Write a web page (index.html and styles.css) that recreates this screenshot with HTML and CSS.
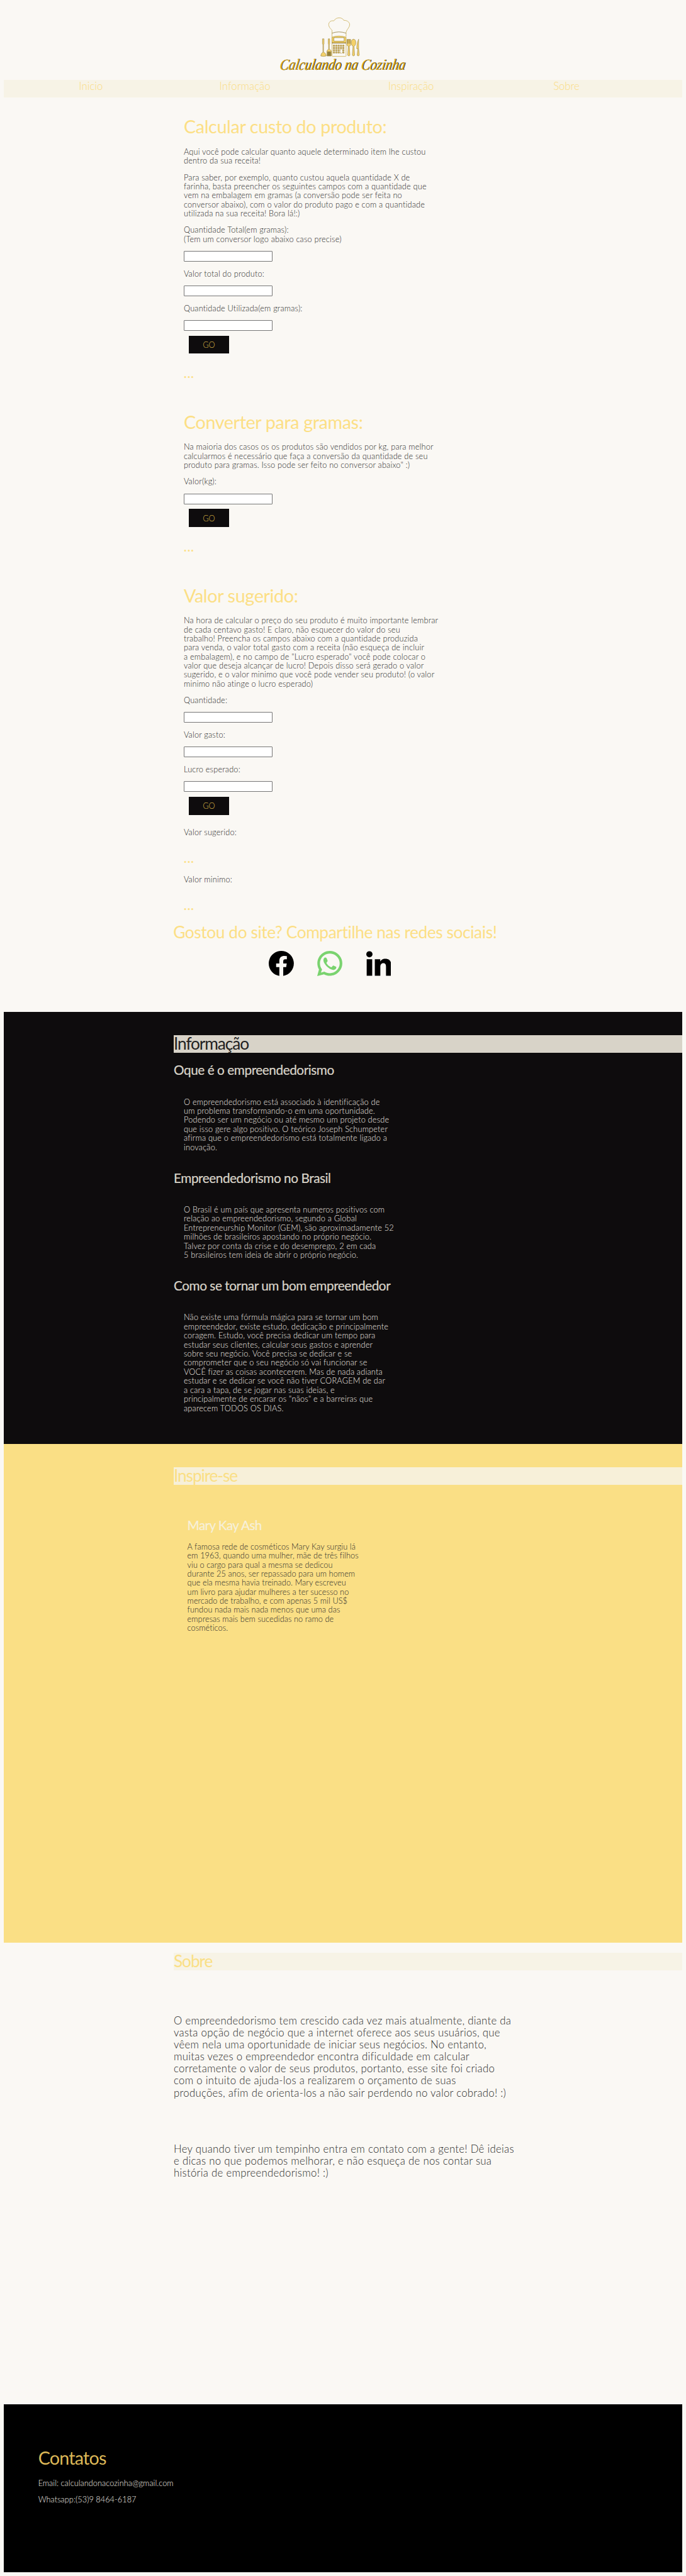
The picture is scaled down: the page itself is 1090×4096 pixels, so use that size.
FILE: index.html
```html
<!DOCTYPE html>
<html lang="pt-BR">
<head>
<meta charset="utf-8">
<title>Calculando na Cozinha</title>
<link rel="stylesheet" href="styles.css">
</head>
<body>
<header class="header">
  <svg class="logo" viewBox="0 0 260 120" role="img" aria-label="Calculando na Cozinha">
    <g fill="none" stroke="#c9ad55" stroke-width="1">
      <path d="M108.5 38V30C104 26 101.500 22 102 18C102.500 13 107 10.500 112 11.500C115 7 119 5.300 123 5.500C127 5.300 131 8 132 10.500C138 10 143.500 14 143.700 19C143.500 25 138 28 136.500 34V43"/>
      <path d="M108.500 36Q122 31 136.500 36" stroke="#8f7b3c"/>
      <path d="M108.500 37V81Q108.500 82.300 110 82.300H135Q136.500 82.300 136.500 81V56"/>
    </g>
    <path d="M108.500 44Q122 39.500 136.500 44V55.700H108.500z" fill="#f6d467" stroke="#a88d42" stroke-width=".8"/>
    <rect x="112.300" y="45" width="20.400" height="6.800" fill="#fbf9f4" stroke="#7c6930" stroke-width=".7"/>
    <path d="M108.500 55.500H136.500" stroke="#7c6930" stroke-width="1.200"/>
    <g stroke="#a98c3c" stroke-width="3.600" stroke-dasharray="3.600 1.100">
      <path d="M110.500 61H133.200M110.500 65.500H133.200M110.500 70H133.200M110.500 74.500H133.200"/>
    </g>
    <g stroke="#f6dc8c" stroke-width="1.300" stroke-dasharray="1.300 3.400">
      <path d="M111.700 61H133M111.700 65.500H133M111.700 70H133M111.700 74.500H133"/>
    </g>
    <rect x="125.500" y="68.500" width="2.800" height="7" fill="#fff"/>
    <g fill="#f4d16a" stroke="#8a7538" stroke-width=".7">
      <path d="M89.500 47.300h3v10l-.9 1.500V74C95 75 96.700 78 96.700 81.500Q91 83 86.200 81.500C86.200 78 88 75 90.400 74V58.800l-.9-1.500z"/>
      <path d="M101 47.300h2.800v10l-.7 1.500V68C106 69 107 71 107 73v8.500h-8.700V73C98.300 71 99.500 69 101.700 68V58.800l-.7-1.500z"/>
      <path d="M99.500 73h6.300v8h-6.300z" fill="#94803c"/>
      <path d="M138.200 48.500h7.400V59q0 2.500-2.700 3l1.200 18q-2.200 3-4.400 0l1.200-18q-2.700-.5-2.700-3z"/>
      <path d="M139.600 48.500V57M141.900 48.500V57M144.200 48.500V57" stroke="#5f512a"/>
      <path d="M151.300 48c6.200 0 5.700 12.500 1 14.200l1.200 17.800q-2.200 3-4.400 0l1.200-17.800c-4.700-1.700-5.200-14.200 1-14.200z"/>
      <path d="M161.500 48c-2.500 5-3.800 13-3.800 19h2.300l-1.500 13q2 3 4.300 0l-1.300-13z"/>
    </g>
    <g class="logo-text" transform="translate(3 108.500) skewX(-9)">
      <text class="logo-dark" x="1.200" y=".6" textLength="250" lengthAdjust="spacingAndGlyphs">Calculando na Cozinha</text>
      <text class="logo-gold" x="0" y="0" textLength="250" lengthAdjust="spacingAndGlyphs">Calculando na Cozinha</text>
    </g>
  </svg>
</header>
<nav class="nav"><a>Inicio</a><a>Informação</a><a>Inspiração</a><a>Sobre</a></nav>

<main>
<section class="calc">
  <h1 class="title">Calcular custo do produto:</h1>
  <p class="intro">Aqui você pode calcular quanto aquele determinado item lhe custou<br>dentro da sua receita!</p>
  <p>Para saber, por exemplo, quanto custou aquela quantidade X de<br>farinha, basta preencher os seguintes campos com a quantidade que<br>vem na embalagem em gramas (a conversão pode ser feita no<br>conversor abaixo), com o valor do produto pago e com a quantidade<br>utilizada na sua receita! Bora lá!:)</p>
  <p>Quantidade Total(em gramas):<br>(Tem um conversor logo abaixo caso precise)</p>
  <input class="field" type="text">
  <p>Valor total do produto:</p>
  <input class="field" type="text">
  <p>Quantidade Utilizada(em gramas):</p>
  <input class="field" type="text">
  <button class="go">GO</button>
  <div class="result">...</div>
</section>

<section class="calc calc-next">
  <h1 class="title">Converter para gramas:</h1>
  <p class="intro">Na maioria dos casos os os produtos são vendidos por kg, para melhor<br>calcularmos é necessário que faça a conversão da quantidade de seu<br>produto para gramas. Isso pode ser feito no conversor abaixo" :)</p>
  <p>Valor(kg):</p>
  <input class="field" type="text">
  <button class="go">GO</button>
  <div class="result">...</div>
</section>

<section class="calc calc-next">
  <h1 class="title">Valor sugerido:</h1>
  <p class="intro">Na hora de calcular o preço do seu produto é muito importante lembrar<br>de cada centavo gasto! E claro, não esquecer do valor do seu<br>trabalho! Preencha os campos abaixo com a quantidade produzida<br>para venda, o valor total gasto com a receita (não esqueça de incluir<br>a embalagem), e no campo de "Lucro esperado" você pode colocar o<br>valor que deseja alcançar de lucro! Depois disso será gerado o valor<br>sugerido, e o valor minimo que você pode vender seu produto! (o valor<br>minimo não atinge o lucro esperado)</p>
  <p>Quantidade:</p>
  <input class="field" type="text">
  <p>Valor gasto:</p>
  <input class="field" type="text">
  <p>Lucro esperado:</p>
  <input class="field" type="text">
  <button class="go">GO</button>
  <p class="after-go">Valor sugerido:</p>
  <div class="result result-low">...</div>
  <p class="after-result">Valor minimo:</p>
  <div class="result result-low">...</div>
</section>

<section class="share">
  <h2 class="share-title">Gostou do site? Compartilhe nas redes sociais!</h2>
  <div class="social">
    <svg viewBox="0 0 24 24"><path d="M24 12.073c0-6.627-5.373-12-12-12s-12 5.373-12 12c0 5.990 4.388 10.954 10.125 11.854v-8.385H7.078v-3.470h3.047V9.430c0-3.007 1.792-4.669 4.533-4.669 1.312 0 2.686.235 2.686.235v2.953H15.830c-1.491 0-1.956.925-1.956 1.874v2.250h3.328l-.532 3.470h-2.796v8.385C19.612 23.027 24 18.062 24 12.073z"/></svg>
    <svg viewBox="0 0 24 24" fill="#7ad36f"><path fill-rule="evenodd" d="M12.050 0C18.600 0 24 5.300 24 11.900S18.600 23.800 12.050 23.800c-2 0-3.900-.5-5.600-1.400L0 24l1.700-6.200C.7 16 .15 14 .15 11.900.15 5.300 5.500 0 12.050 0zM12.050 2.500c-5.200 0-9.400 4.200-9.400 9.400 0 2.200.7 4.200 2 5.800l-1.100 3 3.300-.9c1.500 1 3.300 1.500 5.200 1.500 5.200 0 9.450-4.200 9.450-9.400s-4.250-9.400-9.450-9.400z"/><path d="M6.200 7.600c.5-1 1.100-1.300 1.900-1.200.6 0 .8.300 1 .8l.8 2c.2.5 0 .9-.8 1.800-.3.300-.3.500-.1.900.9 1.600 2.200 2.800 4 3.600.4.200.7.200 1-.1l.9-1.100c.3-.4.500-.4.900-.2l2 1c.5.300.6.400.5.900-.2 1.400-1.200 2-2.500 2.200-1.200.1-3.300-.6-5.300-2.200-1.700-1.400-3.200-3.100-4-4.800-.6-1.300-.7-2.600-.3-3.600z"/></svg>
    <svg viewBox="0 0 50 50"><circle cx="6.200" cy="6.700" r="6.200"/><path d="M.8 16.500h11V49.500H.8zM17 16.500h10.800v4.500c2-3.500 5.700-5.300 10.200-5.300C47 15.700 50 21.500 50 30V49.500H39.300V32c0-4.500-1-7.500-5.300-7.500S28 27.500 28 32V49.500H17z"/></svg>
  </div>
</section>

<section class="info">
  <h1 class="band">Informação</h1>
  <h2 class="topic">Oque é o empreendedorismo</h2>
  <p>O empreendedorismo está associado à identificação de<br>um problema transformando-o em uma oportunidade.<br>Podendo ser um negócio ou até mesmo um projeto desde<br>que isso gere algo positivo. O teórico Joseph Schumpeter<br>afirma que o empreendedorismo está totalmente ligado a<br>inovação.</p>
  <h2 class="topic topic-next">Empreendedorismo no Brasil</h2>
  <p>O Brasil é um país que apresenta numeros positivos com<br>relação ao empreendedorismo, segundo a Global<br>Entrepreneurship Monitor (GEM), são aproximadamente 52<br>milhões de brasileiros apostando no próprio negócio.<br>Talvez por conta da crise e do desemprego, 2 em cada<br>5 brasileiros tem ideia de abrir o próprio negócio.</p>
  <h2 class="topic topic-next">Como se tornar um bom empreendedor</h2>
  <p>Não existe uma fórmula mágica para se tornar um bom<br>empreendedor, existe estudo, dedicação e principalmente<br>coragem. Estudo, você precisa dedicar um tempo para<br>estudar seus clientes, calcular seus gastos e aprender<br>sobre seu negócio. Você precisa se dedicar e se<br>comprometer que o seu negócio só vai funcionar se<br>VOCÊ fizer as coisas acontecerem. Mas de nada adianta<br>estudar e se dedicar se você não tiver CORAGEM de dar<br>a cara a tapa, de se jogar nas suas ideias, e<br>principalmente de encarar os "nãos" e a barreiras que<br>aparecem TODOS OS DIAS.</p>
</section>

<section class="inspire">
  <h1 class="band">Inspire-se</h1>
  <h2 class="person">Mary Kay Ash</h2>
  <p>A famosa rede de cosméticos Mary Kay surgiu lá<br>em 1963, quando uma mulher, mãe de três filhos<br>viu o cargo para qual a mesma se dedicou<br>durante 25 anos, ser repassado para um homem<br>que ela mesma havia treinado. Mary escreveu<br>um livro para ajudar mulheres a ter sucesso no<br>mercado de trabalho, e com apenas 5 mil US$<br>fundou nada mais nada menos que uma das<br>empresas mais bem sucedidas no ramo de<br>cosméticos.</p>
</section>

<section class="about">
  <h1 class="band">Sobre</h1>
  <p>O empreendedorismo tem crescido cada vez mais atualmente, diante da<br>vasta opção de negócio que a internet oferece aos seus usuários, que<br>vêem nela uma oportunidade de iniciar seus negócios. No entanto,<br>muitas vezes o empreendedor encontra dificuldade em calcular<br>corretamente o valor de seus produtos, portanto, esse site foi criado<br>com o intuito de ajuda-los a realizarem o orçamento de suas<br>produções, afim de orienta-los a não sair perdendo no valor cobrado! :)</p>
  <p>Hey quando tiver um tempinho entra em contato com a gente! Dê ideias<br>e dicas no que podemos melhorar, e não esqueça de nos contar sua<br>história de empreendedorismo! :)</p>
</section>
</main>

<footer class="footer">
  <h1 class="footer-title">Contatos</h1>
  <p>Email: calculandonacozinha@gmail.com</p>
  <p>Whatsapp:(53)9 8464-6187</p>
</footer>
</body>
</html>
```
FILE: styles.css
```css
/* 1rem = 10 layout units */
html { font-size: 7.978px; background: #faf8f4; overflow-x: hidden; }
* { box-sizing: border-box; }
body {
  margin: 0;
  padding: .8rem;
  height: 4096px;
  overflow: hidden;
  font-family: "Lato", "Liberation Sans", sans-serif;
  font-weight: 300;
  color: #2b2b2b;
}
h1, h2, p { margin: 0; font-weight: 400; white-space: nowrap; }
p { font-size: 1.6rem; line-height: 1.8rem; font-weight: 300; letter-spacing: .014em; }

.header { height: 15.1rem; padding-top: 2.2rem; display: flex; justify-content: center; align-items: flex-start; }
.logo { width: 26rem; height: 12rem; overflow: visible; }
.logo-text { font: italic 400 31px "Liberation Serif", serif; }
.logo-gold { fill: #d9a91a; }
.logo-dark { fill: #1c1808; }

.nav {
  height: 3.5rem;
  padding-left: 14.9rem;
  display: grid;
  grid-template-columns: 28rem 33.6rem 32.9rem 1fr;
  background: #f7f3e6;
  color: #fadc82;
  font-size: 2.1rem;
  line-height: 2.4rem;
}

.calc { padding: 3.7rem 0 0 35.8rem; display: flex; flex-direction: column; align-items: flex-start; }
.calc-next { padding-top: 6.1rem; }
.calc p { margin-top: 1.5rem; }
.title { font-size: 3.6rem; line-height: 4.4rem; letter-spacing: -.013em; color: #fcdf85; }
.calc .intro { margin-top: 1.82rem; }
.field {
  margin: 1.5rem 0 0;
  padding: 0;
  width: 17.7rem;
  height: 2.1rem;
  border: 1px solid #767676;
  border-radius: 1px;
  background: #fff;
}
.go {
  margin: 1rem 0 0 1rem;
  padding: 0;
  width: 8rem;
  height: 3.6rem;
  border: 0;
  background: #0e0c0d;
  color: #dcb545;
  font: 300 1.6rem "Lato", sans-serif;
}
.result {
  margin-top: 2.55rem;
  height: 2.8rem;
  font-size: 2.4rem;
  line-height: 2.8rem;
  font-weight: 700;
  letter-spacing: .06em;
  color: #fcdf85;
}
.calc .after-go { margin-top: 2.56rem; }
.calc .result-low { margin-top: 3rem; }
.calc .after-result { margin-top: 1.8rem; }

.share { height: 17.8rem; margin-top: 1.9rem; padding-left: 33.7rem; }
.share-title { font-size: 3.3rem; line-height: 4rem; letter-spacing: -.016em; color: #fcdf85; }
.social { display: flex; gap: 4.7rem; margin: 1.7rem 0 0 19rem; }
.social svg { width: 5rem; height: 5rem; }

.band { height: 3.5rem; font-size: 3.3rem; line-height: 3.4rem; letter-spacing: -.043em; }

.info { height: 86.1rem; padding: 4.7rem 0 0 33.8rem; background: #0e0c0d; color: #eeeae2; }
.info .band { background: #d8d3c8; color: #222; }
.topic { margin-top: 1.87rem; font-size: 2.6rem; line-height: 3.2rem; letter-spacing: -.021em; color: #d8d3c8; -webkit-text-stroke: .012em; }
.topic-next { margin-top: 3.73rem; }
.info p { margin: 3.73rem 0 0 2rem; line-height: 1.805rem; }

.inspire { height: 99.4rem; padding: 4.7rem 0 0 33.8rem; background: #fadf85; }
.inspire .band { background: #f7f0d9; color: #fadf85; }
.person { margin: 6.47rem 0 0 2.7rem; font-size: 2.6rem; line-height: 3.2rem; letter-spacing: -.029em; color: #f7f0d9; -webkit-text-stroke: .012em; }
.inspire p { margin: 1.7rem 0 0 2.7rem; letter-spacing: .005em; }

.about { height: 92rem; padding: 2rem 0 0 33.8rem; }
.about .band { background: #f7f3e6; color: #fadf85; }
.about p { margin-top: 8.8rem; font-size: 2.1rem; line-height: 2.395rem; letter-spacing: .017em; }

.footer { height: 33.5rem; padding: 8.5rem 0 0 6.8rem; background: #000; color: #f0ede6; }
.footer-title { font-size: 3.6rem; line-height: 4.4rem; letter-spacing: -.028em; color: #dcb757; }
.footer p { margin-top: 1.53rem; letter-spacing: .002em; }
.footer-title + p { margin-top: 1.87rem; }
```
